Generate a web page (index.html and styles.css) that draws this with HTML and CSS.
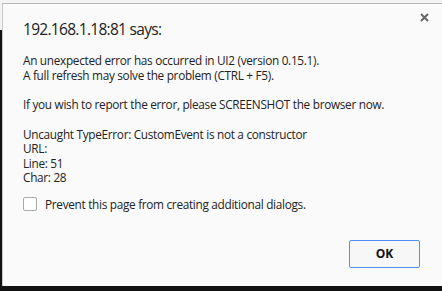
FILE: index.html
```html
<!DOCTYPE html>
<html lang="en">
<head>
  <meta charset="UTF-8">
  <title>192.168.1.18:81 says:</title>
  <link rel="stylesheet" href="styles.css">
</head>
<body>
  <!-- Окно alert -->
  <div class="dialog">
    <div class="close">
      <svg width="9" height="9" viewBox="0 0 9 9">
        <path d="M1 1 L8 8 M8 1 L1 8" stroke="#666" stroke-width="2"/>
      </svg>
    </div>
    <h1 class="title">192.168.1.18:81 says:</h1>
    <div class="message">
      <p>An unexpected error has occurred in UI2 (version 0.15.1).<br>A full refresh may solve the problem (CTRL + F5).</p>
      <p>If you wish to report the error, please SCREENSHOT the browser now.</p>
      <p>Uncaught TypeError: CustomEvent is not a constructor<br>URL:<br>Line: 51<br>Char: 28</p>
    </div>
    <label class="prevent">
      <span class="checkbox"></span>
      <span>Prevent this page from creating additional dialogs.</span>
    </label>
    <div class="buttons">
      <button class="ok-button">OK</button>
    </div>
  </div>
</body>
</html>
```

FILE: styles.css
```css
/* Основные стили */
body {
  margin: 0;
  padding: 0;
  height: 291px;
  overflow: hidden;
  font-family: 'Open Sans', sans-serif;
  background: linear-gradient(to bottom, #f4f4f4 30px, #111 30px);
}

/* Окно диалога */
.dialog {
  position: relative;
  margin: 3px 0 0 2px;
  height: 282px;
  padding: 0 22px 0 20px;
  background-color: #fafafa;
  border-top: 1px solid #b8b8b8;
  border-left: 1px solid #c8c8c8;
  color: #222;
}

.close {
  position: absolute;
  top: 9px;
  right: 13px;
  width: 9px;
  height: 9px;
}

.close svg {
  display: block;
}

.title {
  margin: 0;
  padding-top: 14px;
  font-size: 15.5px;
  font-weight: normal;
  line-height: 22px;
  letter-spacing: -0.7px;
}

.message {
  margin-top: 13px;
  font-size: 11.8px;
  line-height: 14.5px;
  letter-spacing: -0.3px;
}

.message p {
  margin: 0 0 15px;
}

.message p:last-child {
  margin-bottom: 0;
}

/* Чекбокс */
.prevent {
  display: flex;
  align-items: center;
  gap: 8px;
  margin-top: 11px;
  font-size: 11.8px;
  letter-spacing: -0.3px;
}

.checkbox {
  width: 12px;
  height: 12px;
  border: 1px solid #aaa;
  border-radius: 2px;
  background-color: #fff;
}

/* Кнопка OK */
.buttons {
  display: flex;
  justify-content: flex-end;
  margin-top: 28px;
}

.ok-button {
  width: 71px;
  height: 28px;
  font-family: 'Open Sans', sans-serif;
  font-size: 12px;
  font-weight: bold;
  color: #111;
  background-color: #f7f7f7;
  border: 1px solid #4d90fe;
  border-radius: 2px;
}
```
